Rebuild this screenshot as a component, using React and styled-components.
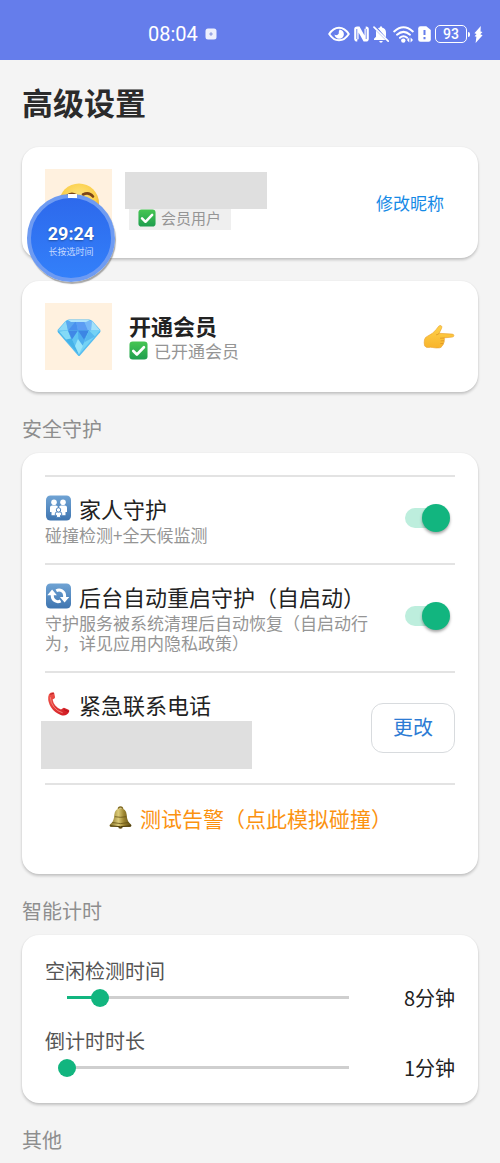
import React, { useState } from "react";
import styled, { createGlobalStyle } from "styled-components";

const GlobalStyle = createGlobalStyle`
  * { box-sizing: border-box; }
  body {
    margin: 0;
    background: #f4f4f4;
    color: #222;
    font-family: "Noto Sans CJK SC", "Noto Sans", sans-serif;
  }
  button, input { font-family: inherit; margin: 0; }
  svg { display: block; flex: none; }
`;

const Page = styled.div`
  position: relative;
  min-height: 100vh;
`;

const StatusBar = styled.header`
  display: flex;
  align-items: center;
  justify-content: space-between;
  height: 60px;
  padding: 8px 17px 0 148px;
  background: #657deb;
  color: #fff;
`;

const StatusGroup = styled.div`
  display: flex;
  align-items: center;
  gap: ${(p) => p.$gap}px;
`;

const Clock = styled.time`
  font-family: Roboto, sans-serif;
  font-size: 20px;
  line-height: 24px;
`;

const Content = styled.main`
  padding: 20px 22px 0;
`;

const PageTitle = styled.h1`
  margin: 0 0 23px;
  font-size: 31px;
  line-height: 44px;
  font-weight: 700;
  color: #2b2b2b;
`;

const CardStack = styled.div`
  display: flex;
  flex-direction: column;
  gap: 23px;
`;

const Card = styled.div`
  padding: 22px 23px;
  background: #fff;
  border-radius: 17px;
  box-shadow: 0 2px 3px rgba(0, 0, 0, 0.2), 0 0 2px rgba(0, 0, 0, 0.06);
`;

const ProfileCard = styled(Card)`
  display: flex;
  align-items: center;
  gap: 17px;
`;

const Avatar = styled.div`
  display: flex;
  align-items: center;
  justify-content: center;
  flex: none;
  width: 67px;
  height: 67px;
  background: #fff1df;
`;

const ProfileText = styled.div`
  flex: 1;
  min-width: 0;
`;

const ProfileName = styled.div`
  font-size: 22px;
  line-height: 28px;
  font-weight: 700;
`;

const ProfileStatus = styled.div`
  display: flex;
  align-items: center;
  gap: 6px;
  font-size: 17px;
  line-height: 24px;
  color: #959595;
`;

const Redacted = styled.div`
  width: ${(p) => p.$width}px;
  height: ${(p) => p.$height}px;
  margin-left: -4px;
  max-width: 100%;
  background: #dfdfdf;
`;

const MemberBadge = styled.div`
  display: inline-flex;
  align-items: center;
  gap: 5px;
  height: 21px;
  padding: 0 10px 3px 9px;
  background: #efefef;
  color: #959595;
  font-size: 15px;
  line-height: 18px;
  vertical-align: top;
`;

const PlainButton = styled.button`
  padding: 0;
  border: 0;
  background: none;
  cursor: pointer;
`;

const RenameButton = styled(PlainButton)`
  padding: 0 11px;
  font-size: 17px;
  line-height: 24px;
  color: #168ae6;
`;

const Section = styled.section`
  display: flex;
  flex-direction: column;
  gap: 10px;
  padding-top: 23px;
`;

const SectionTitle = styled.h2`
  margin: 0;
  font-size: 20px;
  line-height: 28px;
  font-weight: 400;
  color: #8e8e8e;
`;

const SettingRow = styled.div`
  display: flex;
  align-items: center;
  gap: 24px;
  padding: 14px 0 ${(p) => (p.$tight ? 14 : 18)}px;
  border-top: 2px solid #e3e3e3;
`;

const SettingText = styled.div`
  flex: 1;
  min-width: 0;
`;

const SettingLabel = styled.label`
  display: flex;
  align-items: center;
  gap: 8px;
  font-size: 22px;
  line-height: 34px;
  color: #222;
  white-space: nowrap;
`;

const SettingNote = styled.p`
  margin: 0;
  font-size: 17px;
  line-height: 20px;
  color: #959595;
`;

const Switch = styled.input.attrs({ type: "checkbox", role: "switch" })`
  appearance: none;
  display: flex;
  align-items: center;
  flex: none;
  width: 50px;
  height: 28px;
  cursor: pointer;
  &::before {
    content: "";
    width: 36px;
    height: 20px;
    border-radius: 10px;
    background: #d0d0d0;
  }
  &::after {
    content: "";
    width: 28px;
    height: 28px;
    margin-left: -40px;
    border-radius: 50%;
    background: #fff;
    box-shadow: 0 2px 3px rgba(0, 0, 0, 0.35);
  }
  &:checked::before { background: #bdeedd; }
  &:checked::after { margin-left: -19px; background: #12b57f; }
`;

const OutlineButton = styled.button`
  flex: none;
  width: 84px;
  height: 50px;
  padding: 0 0 2px;
  border: 1px solid #d8dbde;
  border-radius: 12px;
  background: #fff;
  color: #2c7bd4;
  font-size: 20px;
  line-height: 28px;
  cursor: pointer;
`;

const AlarmRow = styled.div`
  border-top: 2px solid #e3e3e3;
`;

const AlarmButton = styled(PlainButton)`
  display: flex;
  align-items: center;
  justify-content: center;
  gap: 7px;
  width: 100%;
  height: 67px;
  padding-bottom: 2px;
  font-size: 21px;
  line-height: 34px;
  color: #fb9210;
  white-space: nowrap;
`;

const TimerList = styled(Card)`
  display: flex;
  flex-direction: column;
  gap: 16px;
`;

const TimerLabel = styled.label`
  display: block;
  font-size: 20px;
  line-height: 27px;
  color: #555;
`;

const TimerControl = styled.div`
  display: flex;
  align-items: center;
  height: 27px;
  padding-left: 13px;
`;

const TimerValue = styled.output`
  flex: none;
  width: 97px;
  text-align: right;
  font-size: 20px;
  line-height: 27px;
  color: #222;
`;

const Range = styled.input.attrs({ type: "range" })`
  appearance: none;
  flex: 1;
  min-width: 0;
  height: 18px;
  background: linear-gradient(#12b57f, #12b57f) 9px 50% /
      calc((100% - 18px) * var(--fill)) 3px no-repeat,
    linear-gradient(#cfcfcf, #cfcfcf) 50% 50% / calc(100% - 18px) 3px no-repeat;
  &::-webkit-slider-thumb {
    appearance: none;
    width: 18px;
    height: 18px;
    border-radius: 50%;
    background: #12b57f;
  }
`;

const FloatingTimer = styled.button`
  position: absolute;
  top: 194px;
  left: 27px;
  display: flex;
  flex-direction: column;
  align-items: center;
  justify-content: center;
  width: 88px;
  height: 88px;
  padding: 6px 0 0;
  border: 4px solid #6e9bf2;
  border-radius: 50%;
  background: linear-gradient(#2d69ec, #3380fa);
  color: #fff;
  box-shadow: 1px 2px 1px rgba(100, 100, 100, 0.55);
  cursor: pointer;
  &::before {
    content: "";
    position: absolute;
    top: -4px;
    left: 37px;
    width: 9px;
    height: 4px;
    background: #fff;
  }
`;

const TimerCount = styled.span`
  font-family: Roboto, sans-serif;
  font-size: 18px;
  line-height: 20px;
  font-weight: 700;
  text-shadow: 0 1px 2px rgba(0, 0, 0, 0.35);
`;

const TimerHint = styled.span`
  font-size: 9px;
  line-height: 15px;
  color: #c4d8ff;
`;

const CheckIcon = ({ size = 19 }) => (
  <svg width={size} height={size} viewBox="0 0 20 20" aria-hidden="true">
    <defs>
      <linearGradient id="check-fill" x1="0" y1="0" x2="0" y2="1">
        <stop offset="0" stopColor="#47c653" />
        <stop offset="1" stopColor="#1f9e4f" />
      </linearGradient>
    </defs>
    <rect x="0.5" y="0.5" width="19" height="19" rx="3.5" fill="url(#check-fill)" />
    <path d="M4.5 10.5l3.8 3.7 7.4-7.6" fill="none" stroke="#fff" strokeWidth="2.8" strokeLinecap="round" strokeLinejoin="round" />
  </svg>
);

const BlueTile = ({ children }) => (
  <svg width="26" height="26" viewBox="0 0 26 26" aria-hidden="true">
    <defs>
      <linearGradient id="tile-fill" x1="0" y1="0" x2="0" y2="1">
        <stop offset="0" stopColor="#6fa3d4" />
        <stop offset="1" stopColor="#3f75b0" />
      </linearGradient>
    </defs>
    <rect x="1" y="0.5" width="25" height="25" rx="4.5" fill="url(#tile-fill)" />
    {children}
  </svg>
);

const FamilyIcon = () => (
  <BlueTile>
    <g fill="#fff">
      <circle cx="9" cy="7.2" r="2.8" />
      <circle cx="18" cy="7.2" r="2.8" />
      <path d="M5 12.600q0-2.200 2.200-2.200h3.600q2.200 0 2.200 2.200v7.600H6.500v-3.200H5zM22 12.600q0-2.200-2.200-2.200h-3.600q-2.200 0-2.200 2.200v7.600h6.500v-3.200H22z" />
    </g>
    <g fill="#fff" stroke="#4c82bc" strokeWidth="1">
      <path d="M10.300 18.800q0-2 2-2h2.400q2 0 2 2v1.600h-1.200v2h-4v-2h-1.200z" />
      <circle cx="13.500" cy="14.900" r="2.200" />
    </g>
  </BlueTile>
);

const RefreshIcon = () => (
  <BlueTile>
    <g fill="none" stroke="#fff" strokeWidth="3">
      <path d="M7.300 11v2a5.600 5.600 0 0 0 8.300 4.900" />
      <path d="M11.300 7.700a5.600 5.600 0 0 1 8.300 4.900v2.200" />
    </g>
    <path d="M2.300 12.200L7.100 6.600l4.800 5.600zM14.900 14h9.400L19.600 19.600z" fill="#fff" />
  </BlueTile>
);

const PhoneIcon = () => (
  <svg width="26" height="26" viewBox="0 0 26 26" aria-hidden="true">
    <defs>
      <linearGradient id="phone-fill" x1="0" y1="0" x2="1" y2="1">
        <stop offset="0" stopColor="#f0564c" />
        <stop offset="1" stopColor="#cf1720" />
      </linearGradient>
    </defs>
    <path
      d="M5.600 1.700L8 1.200q1 0 1.300 1.200l.7 3.600q.1 1-.7 1.500L7.600 8.500q.5 3.300 2.700 6t5.700 4.100l1.900-1.400q.8-.6 1.700-.2l4 1.800q1 .6.600 1.700-.7 2-2.300 3-2.600 1.800-6.200.5Q9.400 21.600 6 16.300 2.800 11 3.200 6q.3-3.200 2.400-4.300z"
      fill="url(#phone-fill)"
    />
    <path d="M5.300 6.500q.3 5.500 3.700 9.700t8.300 5.500" fill="none" stroke="#f58a7e" strokeWidth="0.9" strokeLinecap="round" />
    <path d="M5.600 3.200l2.800-.8M19.200 18.700l3.800 1.700" stroke="#a80f19" strokeWidth="0.8" strokeLinecap="round" />
  </svg>
);

const BellIcon = () => (
  <svg width="25" height="24" viewBox="0 0 25 24" aria-hidden="true">
    <defs>
      <linearGradient id="bell-fill" x1="0" y1="0" x2="1" y2="0">
        <stop offset="0" stopColor="#7b671c" />
        <stop offset="0.4" stopColor="#dccb78" />
        <stop offset="0.65" stopColor="#9d8530" />
        <stop offset="1" stopColor="#594812" />
      </linearGradient>
    </defs>
    <path d="M10.500 3q0-2 2-2t2 2" fill="none" stroke="#806b22" strokeWidth="1.600" />
    <circle cx="12.500" cy="20.500" r="2.300" fill="#5e4b12" />
    <path d="M12.500 2.200q5.600.3 6.200 6.500.4 6 2.800 8.300 2 1.600 2 2.600 0 1.400-2 1.400h-18q-2 0-2-1.400 0-1 2-2.600 2.400-2.300 2.800-8.300.6-6.200 6.200-6.500z" fill="url(#bell-fill)" />
    <path d="M4.300 16.500q8.200 2.200 16.400 0M6.800 10.700q5.700 1.200 11.400 0" fill="none" stroke="#665315" strokeWidth="0.8" />
    <path d="M2 19.800q10.500 1.800 21 0" fill="none" stroke="#4d3d0e" strokeWidth="1" />
  </svg>
);

const DiamondIcon = () => (
  <svg width="46" height="40" viewBox="0 0 46 40" aria-hidden="true">
    <path d="M13 2.500h20q2 0 3.500 1.500l7.500 8.500q1.200 1.500 0 3L24 38.500q-1 1-2 0L2 15.500q-1.200-1.500 0-3L9.500 4Q11 2.500 13 2.500z" fill="#55bcf0" />
    <path d="M10 4L2 13.500h10z" fill="#8ed9f7" />
    <path d="M10 4l2 9.500L20 5z" fill="#5aa6f0" />
    <path d="M20 4l-8 9.500h10z" fill="#4a90ee" />
    <path d="M20 4l2 9.500h10L28 4z" fill="#5c9cf3" />
    <path d="M28 4l4 9.500h3L36 4z" fill="#76b8f8" />
    <path d="M36 4l8 9.500h-9z" fill="#a2e0fa" />
    <path d="M2 14.500l10-1 11 24z" fill="#45b2e8" />
    <path d="M3 14.500l9-1 3 8-5 1z" fill="#84daf7" />
    <path d="M12 13.500h11v24z" fill="#5fc4f3" />
    <path d="M12 13.500h10l-6 9z" fill="#4088e6" />
    <path d="M22 13.500h11L23 37.500z" fill="#4dacee" />
    <path d="M22 13.500h11l-5 9z" fill="#3c86e4" />
    <path d="M33 13.500h11L23 37.500z" fill="#74d2f5" />
    <path d="M33 13.500l6 6-11 6z" fill="#58b8ef" />
    <path d="M22 22l5 7-4 8.500-4-8.500z" fill="#97e4fa" />
    <path d="M12 3h22l-4 2H15z" fill="#b0e4fb" />
  </svg>
);

const PointingHandIcon = () => (
  <svg width="32" height="24" viewBox="0 0 32 24" aria-hidden="true">
    <defs>
      <linearGradient id="hand-fill" x1="0" y1="0" x2="0" y2="1">
        <stop offset="0" stopColor="#ffd24a" />
        <stop offset="1" stopColor="#f8b42c" />
      </linearGradient>
    </defs>
    <path
      d="M1.500 14.500q.5-2.400 3.500-3.600 4.500-1.800 8-6.200l2.700-3.500q1.300-1.200 2.500-.4t.4 2.500l-2.400 5 13 .8q1.700.2 1.700 1.500t-1.700 1.500l-8.200.8q1 1.400.1 2.700.6 1.600-.7 2.700.2 1.900-1.500 2.600-.3 1.700-2.200 1.900-3.800.5-7.200-.3-2-.5-4 0-3 .3-3.900-1.700-.8-3-.1-6.300z"
      fill="url(#hand-fill)"
      stroke="#eaa02a"
      strokeWidth="0.6"
    />
    <path d="M21 13l-3.500.2M21 15.700l-3 .2M20.300 18.400l-2.600.2M16 8.600q-1 1-2.500 1.200" fill="none" stroke="#d98e20" strokeWidth="0.7" strokeLinecap="round" />
  </svg>
);

const FaceIcon = () => (
  <svg width="42" height="42" viewBox="0 0 42 42" aria-hidden="true">
    <defs>
      <radialGradient id="face-fill" cx="0.5" cy="0.35" r="0.65">
        <stop offset="0" stopColor="#ffe680" />
        <stop offset="0.65" stopColor="#fbcf4c" />
        <stop offset="1" stopColor="#e3982b" />
      </radialGradient>
    </defs>
    <circle cx="21" cy="21.500" r="20" fill="url(#face-fill)" />
    <path d="M9 14q4-4 9-1M25 12.500q6-3 10 2" fill="none" stroke="#7b4518" strokeWidth="2.600" strokeLinecap="round" />
    <path d="M11 27q10 8 20 0" fill="none" stroke="#7b4518" strokeWidth="2" strokeLinecap="round" />
  </svg>
);

const RecordIcon = () => (
  <svg width="12" height="12" viewBox="0 0 12 12" aria-hidden="true">
    <rect x="0.500" y="0.500" width="11" height="11" rx="2.500" fill="#edf0fd" />
    <path d="M6 4.200v3.600M4.200 6h3.600" stroke="#8797dc" strokeWidth="1.200" />
  </svg>
);

const EyeIcon = () => (
  <svg width="22" height="16" viewBox="0 0 22 16" aria-hidden="true">
    <path d="M1.200 8Q5.300 1.700 11 1.700T20.800 8Q16.700 14.300 11 14.300T1.200 8z" fill="none" stroke="#fff" strokeWidth="2" strokeLinejoin="round" />
    <path d="M11.500 3.400a4.700 4.700 0 1 1-5 5 2.600 2.600 0 0 0 4.300-2.600z" fill="#fff" />
  </svg>
);

const NfcIcon = () => (
  <svg width="15" height="16" viewBox="0 0 15 16" aria-hidden="true">
    <path d="M3.200.5h2.300l5 9V2.800h1.200V.5h.3q2.800 0 2.800 2.800v9.400q0 2.800-2.800 2.800H9.600l-5-9v6.700H3.300v2.300H3Q.200 15.500.200 12.700V3.300Q.200.5 3.200.5z" fill="#fff" />
    <path d="M2.800 3v10M12.200 3v10" stroke="#657deb" strokeWidth="0.900" />
  </svg>
);

const BellOffIcon = () => (
  <svg width="16" height="17" viewBox="0 0 16 17" aria-hidden="true">
    <path d="M5 2.300q1-.7 2-.9V.5h2v.9q4 .8 4 5.200v4.800zM2.900 4.600L12.500 14H1v-1.200l2-2V6.500q0-1-.1-1.900zM6.200 15h3.600q-.3 1.700-1.800 1.700T6.200 15z" fill="#fff" />
    <path d="M1 1.200l14.200 14" stroke="#fff" strokeWidth="1.700" strokeLinecap="round" />
  </svg>
);

const WifiIcon = () => (
  <svg width="21" height="17" viewBox="0 0 21 17" aria-hidden="true">
    <g fill="none" stroke="#fff" strokeWidth="2" strokeLinecap="round">
      <path d="M1.200 5.400q9.300-8.200 18.600 0" />
      <path d="M4 8.700q6.500-5.600 13 0" />
      <path d="M6.900 11.800q3.600-3 7.200 0" />
    </g>
    <circle cx="10.300" cy="14.600" r="2.200" fill="#fff" />
    <path d="M16.300 11.500v5L13.900 14zM17.600 11.500L20 14l-2.400 2.500z" fill="#fff" />
  </svg>
);

const SimAlertIcon = () => (
  <svg width="13" height="16" viewBox="0 0 13 16" aria-hidden="true">
    <path d="M2.500.2h5.800L12.800 4v9.600q0 2.200-2.200 2.200H2.500Q.2 15.800.2 13.600V2.400Q.2.200 2.500.2z" fill="#fff" />
    <path d="M6.500 4v5M6.500 11v2.200" stroke="#657deb" strokeWidth="2" />
  </svg>
);

const Battery = styled.span`
  display: flex;
  align-items: center;
  gap: 1px;
  &::after {
    content: "";
    width: 2px;
    height: 5px;
    border-radius: 0 2px 2px 0;
    background: #fff;
  }
`;

const BatteryLevel = styled.span`
  width: 32px;
  height: 18px;
  border: 1px solid #fff;
  border-radius: 5px;
  text-align: center;
  font-family: Roboto, sans-serif;
  font-size: 14px;
  line-height: 16px;
  font-weight: 500;
`;

const BoltIcon = () => (
  <svg width="9" height="17" viewBox="0 0 9 17" aria-hidden="true">
    <path d="M6.800 0L.4 7.200l2.200.8-2 2.200 1.800.6L1.600 17 8.600 9.200l-2.300-.9 2.200-2.300-2-.6z" fill="#fff" />
  </svg>
);

function TimerSetting({ id, label, initial }) {
  const [minutes, setMinutes] = useState(initial);
  const min = 1;
  const max = 60;
  return (
    <div>
      <TimerLabel htmlFor={id}>{label}</TimerLabel>
      <TimerControl>
        <Range
          id={id}
          min={min}
          max={max}
          value={minutes}
          onChange={(e) => setMinutes(Number(e.target.value))}
          style={{ "--fill": (minutes - min) / (max - min) }}
        />
        <TimerValue htmlFor={id}>{minutes}分钟</TimerValue>
      </TimerControl>
    </div>
  );
}

export default function App() {
  return (
    <Page>
      <GlobalStyle />
      <StatusBar>
        <StatusGroup $gap={7}>
          <Clock>08:04</Clock>
          <RecordIcon />
        </StatusGroup>
        <StatusGroup $gap={4}>
          <EyeIcon />
          <NfcIcon />
          <BellOffIcon />
          <WifiIcon />
          <SimAlertIcon />
          <Battery>
            <BatteryLevel>93</BatteryLevel>
          </Battery>
          <BoltIcon />
        </StatusGroup>
      </StatusBar>

      <Content>
        <PageTitle>高级设置</PageTitle>
        <CardStack>
          <ProfileCard>
            <Avatar>
              <FaceIcon />
            </Avatar>
            <ProfileText>
              <Redacted $width={142} $height={37} />
              <MemberBadge>
                <CheckIcon size={18} />
                会员用户
              </MemberBadge>
            </ProfileText>
            <RenameButton type="button">修改昵称</RenameButton>
          </ProfileCard>
          <ProfileCard>
            <Avatar>
              <DiamondIcon />
            </Avatar>
            <ProfileText>
              <ProfileName>开通会员</ProfileName>
              <ProfileStatus>
                <CheckIcon />
                已开通会员
              </ProfileStatus>
            </ProfileText>
            <PlainButton type="button" aria-label="开通会员">
              <PointingHandIcon />
            </PlainButton>
          </ProfileCard>
        </CardStack>

        <Section>
          <SectionTitle>安全守护</SectionTitle>
          <Card>
            <SettingRow>
              <SettingText>
                <SettingLabel htmlFor="family">
                  <FamilyIcon />
                  家人守护
                </SettingLabel>
                <SettingNote>碰撞检测+全天候监测</SettingNote>
              </SettingText>
              <Switch id="family" defaultChecked />
            </SettingRow>
            <SettingRow>
              <SettingText>
                <SettingLabel htmlFor="restart">
                  <RefreshIcon />
                  后台自动重启守护（自启动）
                </SettingLabel>
                <SettingNote>守护服务被系统清理后自动恢复（自启动行为，详见应用内隐私政策）</SettingNote>
              </SettingText>
              <Switch id="restart" defaultChecked />
            </SettingRow>
            <SettingRow $tight>
              <SettingText>
                <SettingLabel htmlFor="contact">
                  <PhoneIcon />
                  紧急联系电话
                </SettingLabel>
                <Redacted $width={211} $height={48} />
              </SettingText>
              <OutlineButton id="contact" type="button">
                更改
              </OutlineButton>
            </SettingRow>
            <AlarmRow>
              <AlarmButton type="button">
                <BellIcon />
                测试告警（点此模拟碰撞）
              </AlarmButton>
            </AlarmRow>
          </Card>
        </Section>

        <Section>
          <SectionTitle>智能计时</SectionTitle>
          <TimerList>
            <TimerSetting id="idle" label="空闲检测时间" initial={8} />
            <TimerSetting id="countdown" label="倒计时时长" initial={1} />
          </TimerList>
        </Section>

        <Section>
          <SectionTitle>其他</SectionTitle>
        </Section>
      </Content>

      <FloatingTimer type="button">
        <TimerCount>29:24</TimerCount>
        <TimerHint>长按选时间</TimerHint>
      </FloatingTimer>
    </Page>
  );
}
